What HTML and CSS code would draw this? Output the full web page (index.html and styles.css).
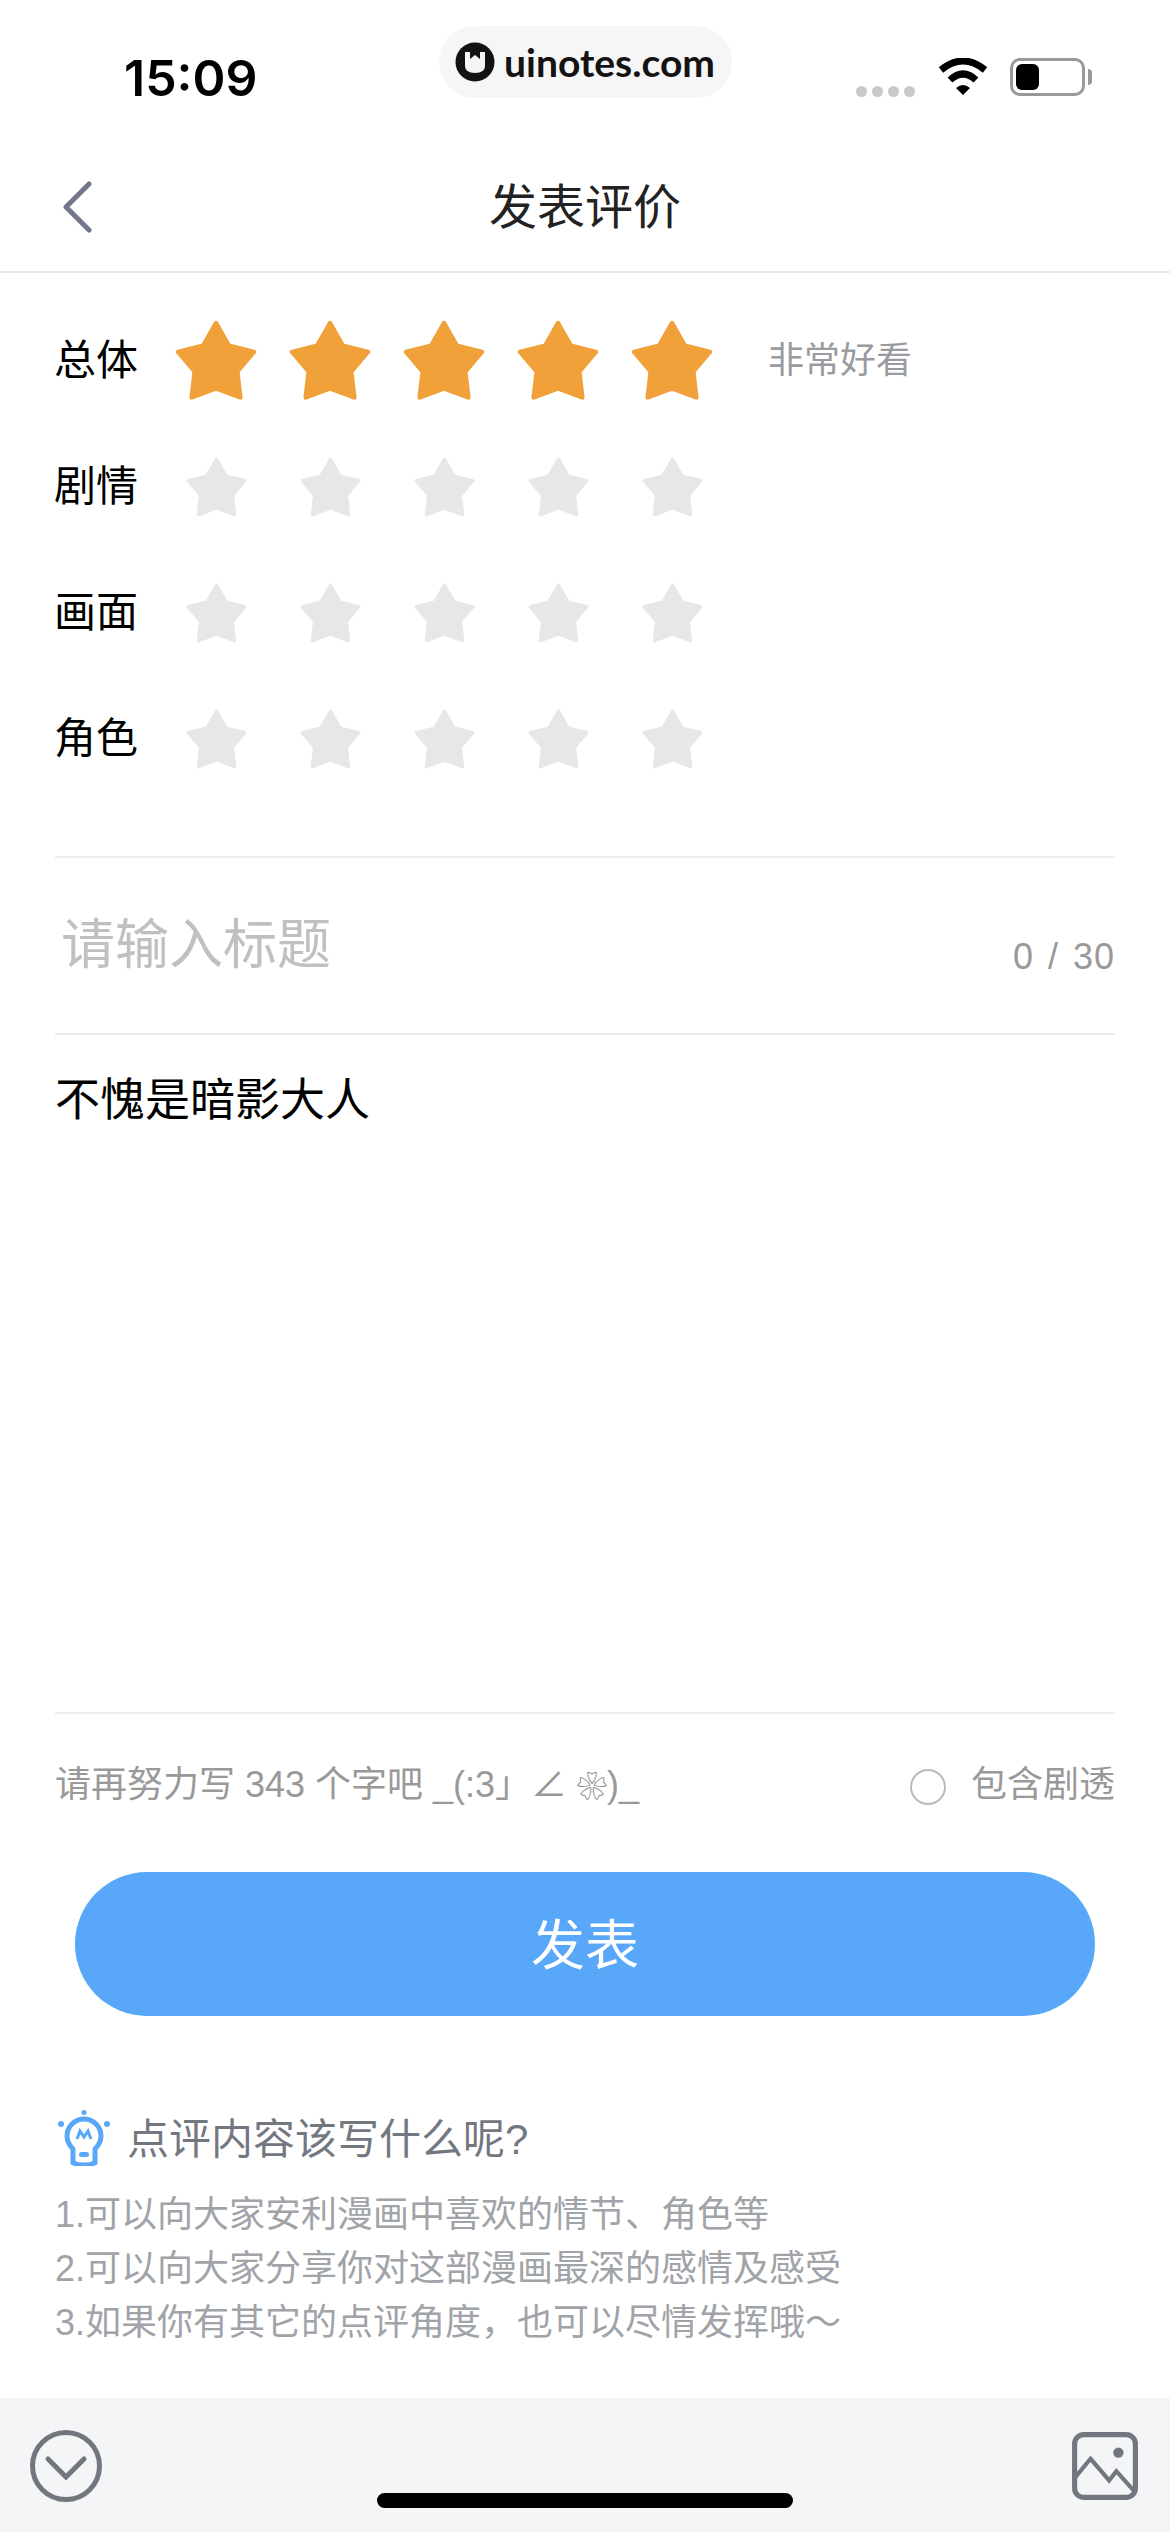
FILE: index.html
```html
<!DOCTYPE html>
<html lang="zh-CN">
<head>
    <meta charset="UTF-8">
    <meta name="viewport" content="width=device-width, initial-scale=1.0">
    <title>发表评价</title>
    <link rel="stylesheet" href="styles.css">
</head>
<body>
    <svg class="defs" width="0" height="0">
        <symbol id="star" viewBox="-4 -4 108 108">
            <path d="M50 0 L67 30 L100 38 L78 64 L82 98 L50 86 L18 98 L22 64 L0 38 L33 30 Z" fill="currentColor" stroke="currentColor" stroke-width="6" stroke-linejoin="round"/>
        </symbol>
    </svg>

    <div class="page">
        <div class="watermark">
            <svg class="wm-logo" viewBox="0 0 40 40">
                <circle cx="20" cy="20" r="19.5" fill="#141212"/>
                <path d="M10 10 V24 Q10 31 20 31 Q30 31 30 24 V10 L25 10 V17 L20 13 L15 17 V10 Z" fill="#f5f5f5"/>
            </svg>
            <span>uinotes.com</span>
        </div>

        <div class="status">
            <span class="time">15:09</span>
            <div class="status-right">
                <div class="signal"><i></i><i></i><i></i><i></i></div>
                <svg class="wifi" viewBox="0 0 50 38">
                    <path d="M3 12 Q25 -6 47 12" fill="none" stroke="#000" stroke-width="7"/>
                    <path d="M12 22 Q25 10 38 22" fill="none" stroke="#000" stroke-width="7"/>
                    <path d="M18 30 Q25 24 32 30 L25 37 Z" fill="#000"/>
                </svg>
                <div class="battery"><div class="battery-fill"></div></div>
                <div class="battery-nub"></div>
            </div>
        </div>

        <div class="nav">
            <svg class="back" viewBox="0 0 30 52">
                <path d="M27 3 L4 26 L27 49" fill="none" stroke="#73768a" stroke-width="5" stroke-linecap="round" stroke-linejoin="round"/>
            </svg>
            <h1 class="nav-title">发表评价</h1>
        </div>

        <div class="ratings">
            <div class="rate-row">
                <span class="rate-label">总体</span>
                <div class="stars on">
                    <span class="star"><svg><use href="#star"/></svg></span>
                    <span class="star"><svg><use href="#star"/></svg></span>
                    <span class="star"><svg><use href="#star"/></svg></span>
                    <span class="star"><svg><use href="#star"/></svg></span>
                    <span class="star"><svg><use href="#star"/></svg></span>
                </div>
                <span class="rate-text">非常好看</span>
            </div>
            <div class="rate-row">
                <span class="rate-label">剧情</span>
                <div class="stars">
                    <span class="star"><svg><use href="#star"/></svg></span>
                    <span class="star"><svg><use href="#star"/></svg></span>
                    <span class="star"><svg><use href="#star"/></svg></span>
                    <span class="star"><svg><use href="#star"/></svg></span>
                    <span class="star"><svg><use href="#star"/></svg></span>
                </div>
            </div>
            <div class="rate-row">
                <span class="rate-label">画面</span>
                <div class="stars">
                    <span class="star"><svg><use href="#star"/></svg></span>
                    <span class="star"><svg><use href="#star"/></svg></span>
                    <span class="star"><svg><use href="#star"/></svg></span>
                    <span class="star"><svg><use href="#star"/></svg></span>
                    <span class="star"><svg><use href="#star"/></svg></span>
                </div>
            </div>
            <div class="rate-row">
                <span class="rate-label">角色</span>
                <div class="stars">
                    <span class="star"><svg><use href="#star"/></svg></span>
                    <span class="star"><svg><use href="#star"/></svg></span>
                    <span class="star"><svg><use href="#star"/></svg></span>
                    <span class="star"><svg><use href="#star"/></svg></span>
                    <span class="star"><svg><use href="#star"/></svg></span>
                </div>
            </div>
        </div>

        <div class="title-field">
            <span class="title-input">请输入标题</span>
            <span class="title-count">0 / 30</span>
        </div>

        <div class="body-field">不愧是暗影大人</div>

        <div class="hint-row">
            <span>请再努力写 343 个字吧 _(:3」∠ <span class="flower">❀</span>)_</span>
            <div class="spoiler"><i class="radio"></i><span>包含剧透</span></div>
        </div>

        <div class="submit">发表</div>

        <div class="tips">
            <div class="tips-head">
                <svg class="bulb" viewBox="0 0 52 56">
                    <circle cx="26" cy="2.5" r="2.5" fill="#58a7f8"/>
                    <circle cx="3" cy="14" r="3" fill="#58a7f8"/>
                    <circle cx="49" cy="14" r="3" fill="#58a7f8"/>
                    <path d="M15 53 V39 Q9 33 9 26 A17 17 0 0 1 43 26 Q43 33 37 39 V53 Q26 57 15 53 Z" fill="none" stroke="#58a7f8" stroke-width="5" stroke-linejoin="round"/>
                    <path d="M19 29 L22 21 L26 27 L30 21 L33 29" fill="none" stroke="#58a7f8" stroke-width="3"/>
                    <rect x="21" y="42" width="10" height="5" rx="2.5" fill="#58a7f8"/>
                </svg>
                <span>点评内容该写什么呢?</span>
            </div>
            <p>1.可以向大家安利漫画中喜欢的情节、角色等</p>
            <p>2.可以向大家分享你对这部漫画最深的感情及感受</p>
            <p>3.如果你有其它的点评角度，也可以尽情发挥哦～</p>
        </div>

        <div class="toolbar">
            <svg class="tool-down" viewBox="0 0 72 72">
                <circle cx="36" cy="36" r="33.5" fill="none" stroke="#73767e" stroke-width="5"/>
                <path d="M18 29 L36 47 L54 29" fill="none" stroke="#73767e" stroke-width="5" stroke-linecap="round"/>
            </svg>
            <svg class="tool-img" viewBox="0 0 64 66">
                <rect x="2.5" y="2.5" width="59" height="61" rx="9" fill="none" stroke="#73767e" stroke-width="5"/>
                <path d="M3 44 L18 26 L36 47 L43 38 L61 58" fill="none" stroke="#73767e" stroke-width="4"/>
                <circle cx="45" cy="20" r="5" fill="#73767e"/>
            </svg>
            <div class="home-bar"></div>
        </div>
    </div>
</body>
</html>
```

FILE: styles.css
```css
* {
    box-sizing: border-box;
}
body {
    margin: 0;
    background-color: #fff;
    font-family: "Liberation Sans", "Noto Sans CJK SC", sans-serif;
    color: #000;
}
.defs {
    position: absolute;
}
.page {
    position: relative;
    width: 1170px;
    height: 2532px;
    display: flex;
    flex-direction: column;
    overflow: hidden;
}

/* status bar */
.watermark {
    position: absolute;
    top: 26px;
    left: 439px;
    width: 293px;
    height: 72px;
    display: flex;
    align-items: center;
    gap: 9px;
    padding-left: 16px;
    border-radius: 36px;
    background-color: #f6f6f6;
    font-family: Lato, sans-serif;
    font-weight: 700;
    font-size: 39px;
    color: #141212;
}
.wm-logo {
    width: 40px;
    height: 40px;
}
.status {
    height: 140px;
    flex: none;
    display: flex;
    justify-content: space-between;
    padding: 54px 78px 0 124px;
}
.time {
    font-family: Inter, sans-serif;
    font-weight: 600;
    font-size: 50px;
    line-height: 48px;
}
.status-right {
    display: flex;
    align-items: flex-start;
    padding-top: 4px;
}
.signal {
    display: flex;
    gap: 5px;
    margin-top: 28px;
    margin-right: 23px;
}
.signal i {
    width: 11px;
    height: 11px;
    border-radius: 50%;
    background-color: #c9c9c9;
}
.wifi {
    width: 50px;
    height: 38px;
    margin-right: 22px;
}
.battery {
    width: 75px;
    height: 38px;
    padding: 3px;
    border: 3px solid #999;
    border-radius: 10px;
}
.battery-fill {
    width: 23px;
    height: 100%;
    border-radius: 6px;
    background-color: #000;
}
.battery-nub {
    width: 4px;
    height: 16px;
    margin: 11px 0 0 3px;
    border-radius: 0 4px 4px 0;
    background-color: #999;
}

/* nav */
.nav {
    height: 133px;
    flex: none;
    display: flex;
    align-items: center;
    justify-content: center;
    position: relative;
    padding-top: 4px;
    border-bottom: 2px solid #e8e8e8;
}
.back {
    position: absolute;
    left: 62px;
    top: 41px;
    width: 30px;
    height: 52px;
}
.nav-title {
    margin: 0;
    font-weight: 400;
    font-size: 48px;
    line-height: 68px;
    color: #222;
}

/* ratings */
.ratings {
    flex: none;
    margin: 0 55px;
    padding-top: 25px;
    height: 583px;
}
.rate-row {
    height: 126px;
    display: flex;
    align-items: center;
}
.rate-label {
    width: 104px;
    margin-left: -1px;
    margin-right: 1px;
    padding-bottom: 9px;
    font-size: 42px;
}
.stars {
    display: flex;
    color: #e6e7e9;
}
.stars.on {
    color: #f1a139;
}
.star {
    width: 114px;
    height: 84px;
    display: flex;
    align-items: center;
    justify-content: center;
}
.star svg {
    width: 61px;
    height: 61px;
}
.stars.on .star svg {
    width: 82px;
    height: 82px;
}
.rate-text {
    margin-left: 39px;
    padding-bottom: 9px;
    font-size: 36px;
    color: #999ba0;
}

/* fields */
.title-field {
    flex: none;
    height: 179px;
    margin: 0 55px;
    display: flex;
    justify-content: space-between;
    border-top: 2px solid #ececec;
    border-bottom: 2px solid #ececec;
}
.title-input {
    padding: 48px 0 0 6px;
    font-size: 54px;
    line-height: 78px;
    color: #c0c0c0;
}
.title-count {
    padding-top: 74px;
    font-size: 36px;
    line-height: 50px;
    letter-spacing: 1px;
    word-spacing: 3px;
    color: #999;
}
.body-field {
    flex: none;
    height: 679px;
    margin: 0 55px;
    padding-top: 34px;
    font-size: 45px;
    line-height: 64px;
    border-bottom: 2px solid #ececec;
}
.hint-row {
    flex: none;
    height: 70px;
    margin: 45px 55px 0;
    display: flex;
    justify-content: space-between;
    align-items: flex-start;
    font-size: 36px;
    line-height: 52px;
    color: #999;
}
.flower {
    font-size: 30px;
    color: #8a8a8a;
}
.spoiler {
    display: flex;
    align-items: center;
    gap: 25px;
}
.radio {
    width: 36px;
    height: 36px;
    margin-top: 4px;
    border: 2px solid #bbb;
    border-radius: 50%;
}
.submit {
    flex: none;
    height: 144px;
    margin: 43px 75px 0;
    padding-bottom: 5px;
    display: flex;
    align-items: center;
    justify-content: center;
    border-radius: 72px;
    background-color: #58a7f8;
    color: #fff;
    font-size: 54px;
}

/* tips */
.tips {
    flex: none;
    margin: 97px 55px 0;
    font-size: 36px;
    line-height: 54px;
    color: #a0a3a8;
}
.tips p {
    margin: 0;
}
.tips-head {
    display: flex;
    align-items: center;
    gap: 17px;
    height: 56px;
    margin-bottom: 19px;
    font-size: 42px;
    color: #73777f;
}
.tips-head span {
    margin-top: -2px;
}
.bulb {
    width: 52px;
    height: 56px;
    margin: -6px 0 0 3px;
}

/* bottom toolbar */
.toolbar {
    position: absolute;
    left: 0;
    right: 0;
    bottom: 0;
    height: 134px;
    display: flex;
    justify-content: space-between;
    padding: 32px 32px 0 30px;
    background-color: #f3f5f7;
}
.tool-down {
    width: 72px;
    height: 72px;
}
.tool-img {
    width: 66px;
    height: 68px;
    margin-top: 2px;
}
.home-bar {
    position: absolute;
    left: 377px;
    bottom: 24px;
    width: 416px;
    height: 15px;
    border-radius: 8px;
    background-color: #000;
}
```
